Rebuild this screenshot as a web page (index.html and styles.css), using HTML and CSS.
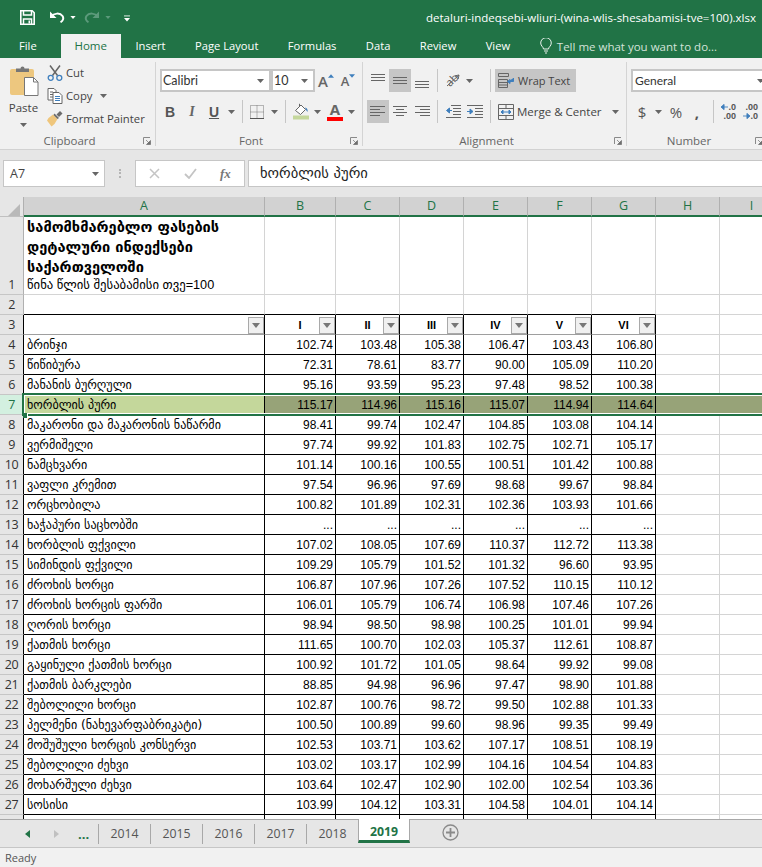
FILE: index.html
```html
<!DOCTYPE html>
<html lang="ka">
<head>
<meta charset="utf-8">
<title>detaluri-indeqsebi-wliuri</title>
<link rel="stylesheet" href="styles.css">
</head>
<body>
<svg class="defs" aria-hidden="true">
  <symbol id="caret" viewBox="0 0 7 4"><path d="M0 0h7L3.5 4z"/></symbol>
  <symbol id="launch" viewBox="0 0 8 8"><path d="M.5 7V.5H7" fill="none" stroke="#8a8a8a"/><path d="M3 3l3.5 3.5M7.5 3.5v4h-4z" fill="#6f6f6f" stroke="#6f6f6f" stroke-width=".7"/></symbol>
  <symbol id="al-top" viewBox="0 0 18 18"><path d="M2 3.5h14M2 6.5h14M2 9.5h14" stroke="#666" fill="none" transform="translate(0 -1)"/></symbol>
  <symbol id="al-mid" viewBox="0 0 18 18"><path d="M2 5.5h14M2 8.5h14M2 11.5h14" stroke="#666" fill="none"/></symbol>
  <symbol id="al-bot" viewBox="0 0 18 18"><path d="M2 9.500h14M2 12.500h14M2 15.500h14" stroke="#666" fill="none"/></symbol>
  <symbol id="al-left" viewBox="0 0 18 18"><path d="M1 3.500h15M1 6.500h10M1 9.500h15M1 12.500h10" stroke="#666" fill="none"/></symbol>
  <symbol id="al-center" viewBox="0 0 18 18"><path d="M2 3.500h14M5 6.500h8M2 9.500h14M5 12.500h8" stroke="#666" fill="none"/></symbol>
  <symbol id="al-right" viewBox="0 0 18 18"><path d="M2 3.500h15M7 6.500h10M2 9.500h15M7 12.500h10" stroke="#666" fill="none"/></symbol>
  <symbol id="arr-l" viewBox="0 0 8 6"><path d="M8 3H2M3.500 0L0 3l3.500 3z" stroke="#3f7fbd" fill="#3f7fbd"/></symbol>
  <symbol id="arr-r" viewBox="0 0 8 6"><path d="M0 3h6M4.500 0L8 3 4.500 6z" stroke="#3f7fbd" fill="#3f7fbd"/></symbol>
</svg>

<header class="titlebar">
  <div class="qat">
    <svg class="qat-save" viewBox="0 0 15 15"><path d="M.8.8h11.400l2 2v11.400H.8z" fill="none" stroke="#fff" stroke-width="1.600"/><path d="M3.500 1v4h8V1M3.500 14V9h8v5" fill="none" stroke="#fff" stroke-width="1.500"/><path d="M8.500 10.500h1.500v3H8.500z" fill="#fff"/></svg>
    <svg class="qat-undo" viewBox="0 0 16 12"><path d="M2 5.500c3-3.500 9-4 11.500-.5 1.500 2.300.5 5-2 6.200" fill="none" stroke="#fff" stroke-width="2"/><path d="M1 .5v6.500h6.500z" fill="#fff"/></svg>
    <svg class="caret-w"><use href="#caret"/></svg>
    <svg class="qat-redo" viewBox="0 0 16 12"><path d="M14 5.500c-3-3.500-9-4-11.500-.5-1.500 2.300-.5 5 2 6.200" fill="none" stroke="#5c9a7b" stroke-width="2"/><path d="M15 .5v6.500H8.500z" fill="#5c9a7b"/></svg>
    <svg class="caret-d"><use href="#caret"/></svg>
    <svg class="qat-more" viewBox="0 0 7 7"><path d="M0 .5h7" stroke="#fff"/><path d="M0 3h7L3.500 7z" fill="#fff"/></svg>
  </div>
  <div class="doc-title">detaluri-indeqsebi-wliuri-(wina-wlis-shesabamisi-tve=100).xlsx</div>
</header>

<nav class="tabs">
  <span class="tab tab-file">File</span>
  <span class="tab tab-on">Home</span>
  <span class="tab">Insert</span>
  <span class="tab">Page Layout</span>
  <span class="tab">Formulas</span>
  <span class="tab">Data</span>
  <span class="tab">Review</span>
  <span class="tab">View</span>
  <span class="tell">
    <svg class="bulb" viewBox="0 0 12 16"><path d="M3.500 11c0-2-2.800-3-2.800-6a5.300 5.300 0 0 1 10.600 0c0 3-2.800 4-2.800 6zM4 13h4M5 15h2" fill="none" stroke="#fff" stroke-opacity=".9"/></svg>
    <span>Tell me what you want to do...</span>
  </span>
</nav>

<section class="ribbon">
  <div class="group g-clip">
    <div class="g-body clip-body">
      <div class="paste">
        <svg class="paste-ic" viewBox="0 0 29 30"><rect y="3" width="24" height="26" rx="2" fill="#edc77f"/><path d="M6 6V2.500h4.500a2 2 0 0 1 4 0H19V6z" fill="#767676"/><path d="M14.500 11.500h9l4.500 4.500v13.500H14.500z" fill="#fff" stroke="#777"/><path d="M23.500 11.500V16H28" fill="none" stroke="#777"/></svg>
        <span class="paste-t">Paste</span>
        <svg class="caret"><use href="#caret"/></svg>
      </div>
      <div class="clip-list">
        <div class="clip-row">
          <svg class="clip-ic" viewBox="0 0 16 16"><path d="M3 .5l7.500 10M13 .5L5.500 10.500" stroke="#666" stroke-width="1.500" fill="none"/><circle cx="3.700" cy="12.800" r="2.500" fill="none" stroke="#3f7fbd" stroke-width="1.300"/><circle cx="12.300" cy="12.800" r="2.500" fill="none" stroke="#3f7fbd" stroke-width="1.300"/></svg>
          <span>Cut</span>
        </div>
        <div class="clip-row">
          <svg class="clip-ic" viewBox="0 0 16 16"><path d="M1 .5h6l2 2V12H1z" fill="#fff" stroke="#666"/><path d="M3 4h3M3 6.500h4M3 9h4" stroke="#666"/><path d="M6 4.500h6l3 3v8H6z" fill="#fff" stroke="#666"/><path d="M8 8.500h5M8 10.500h5M8 12.500h5" stroke="#3f7fbd"/></svg>
          <span>Copy</span>
          <svg class="caret caret-copy"><use href="#caret"/></svg>
        </div>
        <div class="clip-row">
          <svg class="clip-ic" viewBox="0 0 16 16"><path d="M6 3.500l4.500 4.500-3 5-3 2.500L0 9.500l1.500-2.500z" fill="#efc67c"/><path d="M6.500 4l4 4 1.500-1-4.500-4.500z" fill="#6b6b6b"/><path d="M9.500 3.500L13 0l2.500 2.500L12 6z" fill="#6b6b6b"/></svg>
          <span>Format Painter</span>
        </div>
      </div>
    </div>
    <div class="g-label"><span>Clipboard</span><svg class="launch"><use href="#launch"/></svg></div>
  </div>

  <div class="group g-font">
    <div class="g-body rows">
      <div class="row">
        <div class="field f-name"><span>Calibri</span><svg class="caret"><use href="#caret"/></svg></div>
        <div class="field f-size"><span>10</span><svg class="caret"><use href="#caret"/></svg></div>
        <div class="btn grow"><span class="ga ga-big">A</span><svg class="tri" viewBox="0 0 7 4"><path d="M0 4h7L3.500 0z" fill="#3f7fbd"/></svg></div>
        <div class="btn grow"><span class="ga">A</span><svg class="tri" viewBox="0 0 7 4"><path d="M0 0h7L3.500 4z" fill="#3f7fbd"/></svg></div>
      </div>
      <div class="row row-fmt">
        <div class="btn fb">B</div>
        <div class="btn fi">I</div>
        <div class="btn fu">U</div>
        <div class="cbtn"><svg class="caret"><use href="#caret"/></svg></div>
        <i class="sep s-a"></i>
        <div class="btn b-borders"><svg class="ic14" viewBox="0 0 14 14"><path d="M.5.500h13v13H.5zM7 .5v13M.5 7h13" fill="none" stroke="#777" stroke-dasharray="1 1"/><path d="M0 13.500h14" stroke="#555"/></svg></div>
        <div class="cbtn"><svg class="caret"><use href="#caret"/></svg></div>
        <i class="sep s-a"></i>
        <div class="btn b-fill"><svg class="ic17" viewBox="0 0 17 17"><path d="M2.500 7.500L8 2l4.500 4.500-5 5z" fill="#fff" stroke="#666"/><path d="M6.500 4V.8" stroke="#666"/><path d="M12 4.500c2 .5 3 2 2.500 4.500l-1.500-2z" fill="#3f7fbd"/><path d="M0 12.500h16v4H0z" fill="#c4d79b"/></svg></div>
        <div class="cbtn c11"><svg class="caret"><use href="#caret"/></svg></div>
        <div class="btn b-color"><span class="color-a">A</span><i class="color-bar"></i></div>
        <div class="cbtn c11"><svg class="caret"><use href="#caret"/></svg></div>
      </div>
    </div>
    <div class="g-label"><span>Font</span><svg class="launch"><use href="#launch"/></svg></div>
  </div>

  <div class="group g-align">
    <div class="g-body acols">
      <div class="acol">
        <div class="row">
          <div class="btn"><svg class="ic18"><use href="#al-top"/></svg></div>
          <div class="btn on"><svg class="ic18"><use href="#al-mid"/></svg></div>
          <div class="btn"><svg class="ic18"><use href="#al-bot"/></svg></div>
        </div>
        <div class="row">
          <div class="btn on"><svg class="ic18"><use href="#al-left"/></svg></div>
          <div class="btn"><svg class="ic18"><use href="#al-center"/></svg></div>
          <div class="btn"><svg class="ic18"><use href="#al-right"/></svg></div>
        </div>
      </div>
      <div class="sepcol"><i class="sep"></i><i class="sep"></i></div>
      <div class="acol acol-mid">
        <div class="row">
          <div class="btn orient"><span class="ab">ab</span><svg class="orient-arrow" viewBox="0 0 18 18"><path d="M3 15L15 4M15 4l-4 .8M15 4l-.8 4" fill="none" stroke="#666"/></svg></div>
          <div class="cbtn c11"><svg class="caret"><use href="#caret"/></svg></div>
        </div>
        <div class="row">
          <div class="btn"><svg class="ic18" viewBox="0 0 18 18"><path d="M7 3.500h10M9 6.500h8M9 9.500h8M9 12.500h8M2 15.500h15" transform="translate(0 -1)" stroke="#666" fill="none"/><path d="M8 7.500H3M5.500 5L2.500 7.500 5.500 10z" stroke="#3f7fbd" fill="#3f7fbd"/></svg></div>
          <div class="btn"><svg class="ic18" viewBox="0 0 18 18"><path d="M1 2.500h16M9 5.500h8M9 8.500h8M9 11.500h8M1 14.500h16" stroke="#666" fill="none"/><path d="M1 8.500h5M4 6l3 2.500L4 11z" stroke="#3f7fbd" fill="#3f7fbd"/></svg></div>
        </div>
      </div>
      <div class="sepcol"><i class="sep"></i><i class="sep"></i></div>
      <div class="acol acol-wrap">
        <div class="row">
          <div class="wide wide-wrap on">
            <svg class="ic16" viewBox="0 0 16 16"><path d="M.5.500h10v3H.5zM.5 6.500h9v8h-9z" fill="none" stroke="#666"/><path d="M.5 9.500h9M.5 12h9" stroke="#666"/><path d="M15.500 5v3.500H10M12 6.500L9.500 8.500 12 10.500z" fill="#3f7fbd" stroke="#3f7fbd"/></svg>
            <span>Wrap Text</span>
          </div>
        </div>
        <div class="row">
          <div class="wide">
            <svg class="ic16" viewBox="0 0 16 16"><path d="M.5.500h15v15H.5zM.5 4.500h15M.5 11.500h15M8 .5v4M8 11.500v4" fill="none" stroke="#666"/><path d="M3 8h10M3 8l2-2v4zM13 8l-2-2v4z" stroke="#3f7fbd" fill="#3f7fbd"/></svg>
            <span>Merge &amp; Center</span>
            <svg class="caret caret-merge"><use href="#caret"/></svg>
          </div>
        </div>
      </div>
    </div>
    <div class="g-label"><span>Alignment</span><svg class="launch"><use href="#launch"/></svg></div>
  </div>

  <div class="group g-num">
    <div class="g-body rows">
      <div class="row">
        <div class="field f-gen"><span>General</span><svg class="caret"><use href="#caret"/></svg></div>
      </div>
      <div class="row row-num">
        <div class="btn nsym">$</div>
        <div class="cbtn c10"><svg class="caret"><use href="#caret"/></svg></div>
        <div class="btn nsym n-pct">%</div>
        <div class="btn nsym n-com">,</div>
        <i class="sep s-n"></i>
        <div class="btn dec"><span class="dec-l"><svg class="arr"><use href="#arr-l"/></svg>.0</span><span class="dec-l">.00</span></div>
        <div class="btn dec"><span class="dec-l">.00</span><span class="dec-l"><svg class="arr"><use href="#arr-r"/></svg>.0</span></div>
      </div>
    </div>
    <div class="g-label"><span>Number</span><svg class="launch"><use href="#launch"/></svg></div>
  </div>
</section>

<section class="fbar">
  <div class="namebox"><span>A7</span><svg class="caret"><use href="#caret"/></svg></div>
  <div class="grip"></div>
  <div class="fbtns">
    <svg class="fx-x" viewBox="0 0 11 11"><path d="M1 1l9 9M10 1l-9 9" stroke="#c4c4c4" stroke-width="1.500"/></svg>
    <svg class="fx-c" viewBox="0 0 13 11"><path d="M1 6l4 4 7-9" fill="none" stroke="#c4c4c4" stroke-width="1.800"/></svg>
    <span class="fx">fx</span>
  </div>
  <div class="finput">ხორბლის პური</div>
</section>

<main class="sheet">
<table class="grid">
  <colgroup><col class="c-rn"><col class="c-a"><col class="c-b"><col class="c-n"><col class="c-n"><col class="c-n"><col class="c-n"><col class="c-n"><col class="c-n"><col class="c-n"></colgroup>
  <thead>
    <tr><th class="corner"><svg class="corner-t" viewBox="0 0 12 12"><path d="M12 0v12H0z" fill="#b9b9b9"/></svg></th><th>A</th><th>B</th><th>C</th><th>D</th><th>E</th><th>F</th><th>G</th><th>H</th><th>I</th></tr>
  </thead>
  <tbody>
    <tr class="r-title">
      <th class="rn">1</th>
      <td class="title-cell"><strong>სამომხმარებლო ფასების დეტალური ინდექსები საქართველოში</strong><span class="subtitle">წინა წლის შესაბამისი თვე=100</span></td>
      <td></td><td></td><td></td><td></td><td></td><td></td><td></td><td></td>
    </tr>
    <tr class="r-pre"><th class="rn">2</th><td></td><td></td><td></td><td></td><td></td><td></td><td></td><td></td><td></td></tr>
    <tr class="r-head">
      <th class="rn">3</th>
      <td class="hc"><i class="filter"></i></td>
      <td class="hc">I<i class="filter"></i></td>
      <td class="hc">II<i class="filter"></i></td>
      <td class="hc">III<i class="filter"></i></td>
      <td class="hc">IV<i class="filter"></i></td>
      <td class="hc">V<i class="filter"></i></td>
      <td class="hc">VI<i class="filter"></i></td>
      <td></td><td></td>
    </tr>
    <tr class="d"><th class="rn">4</th><td>ბრინჯი</td><td>102.74</td><td>103.48</td><td>105.38</td><td>106.47</td><td>103.43</td><td>106.80</td><td></td><td></td></tr>
    <tr class="d"><th class="rn">5</th><td>წიწიბურა</td><td>72.31</td><td>78.61</td><td>83.77</td><td>90.00</td><td>105.09</td><td>110.20</td><td></td><td></td></tr>
    <tr class="d"><th class="rn">6</th><td>მანანის ბურღული</td><td>95.16</td><td>93.59</td><td>95.23</td><td>97.48</td><td>98.52</td><td>100.38</td><td></td><td></td></tr>
    <tr class="d sel"><th class="rn">7</th><td class="active"><i class="selbox"></i><i class="handle"></i>ხორბლის პური</td><td>115.17</td><td>114.96</td><td>115.16</td><td>115.07</td><td>114.94</td><td>114.64</td><td></td><td></td></tr>
    <tr class="d"><th class="rn">8</th><td>მაკარონი და მაკარონის ნაწარმი</td><td>98.41</td><td>99.74</td><td>102.47</td><td>104.85</td><td>103.08</td><td>104.14</td><td></td><td></td></tr>
    <tr class="d"><th class="rn">9</th><td>ვერმიშელი</td><td>97.74</td><td>99.92</td><td>101.83</td><td>102.75</td><td>102.71</td><td>105.17</td><td></td><td></td></tr>
    <tr class="d"><th class="rn">10</th><td>ნამცხვარი</td><td>101.14</td><td>100.16</td><td>100.55</td><td>100.51</td><td>101.42</td><td>100.88</td><td></td><td></td></tr>
    <tr class="d"><th class="rn">11</th><td>ვაფლი კრემით</td><td>97.54</td><td>96.96</td><td>97.69</td><td>98.68</td><td>99.67</td><td>98.84</td><td></td><td></td></tr>
    <tr class="d"><th class="rn">12</th><td>ორცხობილა</td><td>100.82</td><td>101.89</td><td>102.31</td><td>102.36</td><td>103.93</td><td>101.66</td><td></td><td></td></tr>
    <tr class="d"><th class="rn">13</th><td>ხაჭაპური საცხობში</td><td>...</td><td>...</td><td>...</td><td>...</td><td>...</td><td>...</td><td></td><td></td></tr>
    <tr class="d"><th class="rn">14</th><td>ხორბლის ფქვილი</td><td>107.02</td><td>108.05</td><td>107.69</td><td>110.37</td><td>112.72</td><td>113.38</td><td></td><td></td></tr>
    <tr class="d"><th class="rn">15</th><td>სიმინდის ფქვილი</td><td>109.29</td><td>105.79</td><td>101.52</td><td>101.32</td><td>96.60</td><td>93.95</td><td></td><td></td></tr>
    <tr class="d"><th class="rn">16</th><td>ძროხის ხორცი</td><td>106.87</td><td>107.96</td><td>107.26</td><td>107.52</td><td>110.15</td><td>110.12</td><td></td><td></td></tr>
    <tr class="d"><th class="rn">17</th><td>ძროხის ხორცის ფარში</td><td>106.01</td><td>105.79</td><td>106.74</td><td>106.98</td><td>107.46</td><td>107.26</td><td></td><td></td></tr>
    <tr class="d"><th class="rn">18</th><td>ღორის ხორცი</td><td>98.94</td><td>98.50</td><td>98.98</td><td>100.25</td><td>101.01</td><td>99.94</td><td></td><td></td></tr>
    <tr class="d"><th class="rn">19</th><td>ქათმის ხორცი</td><td>111.65</td><td>100.70</td><td>102.03</td><td>105.37</td><td>112.61</td><td>108.87</td><td></td><td></td></tr>
    <tr class="d"><th class="rn">20</th><td>გაყინული ქათმის ხორცი</td><td>100.92</td><td>101.72</td><td>101.05</td><td>98.64</td><td>99.92</td><td>99.08</td><td></td><td></td></tr>
    <tr class="d"><th class="rn">21</th><td>ქათმის ბარკლები</td><td>88.85</td><td>94.98</td><td>96.96</td><td>97.47</td><td>98.90</td><td>101.88</td><td></td><td></td></tr>
    <tr class="d"><th class="rn">22</th><td>შებოლილი ხორცი</td><td>102.87</td><td>100.76</td><td>98.72</td><td>99.50</td><td>102.88</td><td>101.33</td><td></td><td></td></tr>
    <tr class="d"><th class="rn">23</th><td>პელმენი (ნახევარფაბრიკატი)</td><td>100.50</td><td>100.89</td><td>99.60</td><td>98.96</td><td>99.35</td><td>99.49</td><td></td><td></td></tr>
    <tr class="d"><th class="rn">24</th><td>მოშუშული ხორცის კონსერვი</td><td>102.53</td><td>103.71</td><td>103.62</td><td>107.17</td><td>108.51</td><td>108.19</td><td></td><td></td></tr>
    <tr class="d"><th class="rn">25</th><td>შებოლილი ძეხვი</td><td>103.02</td><td>103.17</td><td>102.99</td><td>104.16</td><td>104.54</td><td>104.83</td><td></td><td></td></tr>
    <tr class="d"><th class="rn">26</th><td>მოხარშული ძეხვი</td><td>103.64</td><td>102.47</td><td>102.90</td><td>102.00</td><td>102.54</td><td>103.36</td><td></td><td></td></tr>
    <tr class="d"><th class="rn">27</th><td>სოსისი</td><td>103.99</td><td>104.12</td><td>103.31</td><td>104.58</td><td>104.01</td><td>104.14</td><td></td><td></td></tr>
    <tr class="d"><th class="rn">28</th><td></td><td>99.99</td><td>99.59</td><td>99.99</td><td>101.81</td><td>97.89</td><td>94.89</td><td></td><td></td></tr>
  </tbody>
</table>
</main>

<section class="sheettabs">
  <div class="tabnav">
    <svg class="nav-l" viewBox="0 0 5 8"><path d="M5 0v8L0 4z"/></svg>
    <svg class="nav-r" viewBox="0 0 5 8"><path d="M0 0v8l5-4z"/></svg>
    <span class="dots">...</span>
  </div>
  <span class="st">2014</span>
  <span class="st">2015</span>
  <span class="st">2016</span>
  <span class="st">2017</span>
  <span class="st st-last">2018</span>
  <span class="st st-on">2019</span>
  <svg class="addsheet" viewBox="0 0 17 17"><circle cx="8.500" cy="8.500" r="7.500" fill="none" stroke="#8a8a8a" stroke-width="1.300"/><path d="M8.500 4v9M4 8.500h9" stroke="#8a8a8a" stroke-width="1.800"/></svg>
</section>

<footer class="status">Ready</footer>
</body>
</html>
```

FILE: styles.css
```css
* { box-sizing: border-box; }
html, body { margin: 0; padding: 0; }
body {
  width: 762px;
  height: 867px;
  overflow: hidden;
  display: flex;
  flex-direction: column;
  font-family: "Open Sans", "Noto Sans", sans-serif;
  font-size: 12px;
  color: #444;
  background: #e6e6e6;
}
.defs { position: absolute; width: 0; height: 0; }
i { display: block; }

/* title bar */
.titlebar {
  height: 34px;
  flex: none;
  background: #217346;
  display: flex;
  align-items: center;
  justify-content: space-between;
  padding: 0 6px 0 20px;
  color: #fff;
}
.qat { display: flex; align-items: center; }
.qat-save { width: 15px; height: 15px; }
.qat-undo { width: 16px; height: 12px; margin-left: 14px; margin-top: -1px; }
.caret-w, .caret-d { width: 6px; height: 3px; margin-left: 5px; }
.caret-w { fill: #fff; }
.caret-d { fill: #5c9a7b; }
.qat-redo { width: 16px; height: 12px; margin-left: 8px; margin-top: -1px; }
.qat-more { width: 6px; height: 7px; margin-left: 13px; margin-top: 2px; }
.doc-title { font-size: 11.5px; white-space: nowrap; }

/* ribbon tabs */
.tabs {
  height: 24px;
  flex: none;
  background: #217346;
  display: flex;
  color: #fff;
  white-space: nowrap;
}
.tab { padding: 0 14.7px; line-height: 23px; font-size: 11.2px; }
.tab-file { padding: 0; margin: 0 24px 0 19px; }
.tab-on { background: #f1f1f1; color: #217346; width: 60px; text-align: center; padding: 0; font-size: 11.5px; }
.tell { display: flex; align-items: center; gap: 5px; margin-left: 15px; font-size: 11.5px; color: #d4e3da; }
.bulb { width: 12px; height: 16px; }

/* ribbon */
.ribbon {
  height: 92px;
  flex: none;
  background: #f1f1f1;
  border-bottom: 1px solid #d2d2d2;
  display: flex;
  overflow: hidden;
}
.group {
  flex: none;
  display: flex;
  flex-direction: column;
  margin-top: 4px;
  height: 84px;
  border-right: 1px solid #d4d4d4;
}
.g-clip { width: 156px; }
.g-font { width: 207px; }
.g-align { width: 264px; }
.g-num { width: 140px; border-right: 0; }
.g-body { height: 73px; flex: none; }
.g-label { display: flex; align-items: center; height: 11px; color: #666; font-size: 11.5px; }
.g-label span { flex: 1; text-align: center; }
.launch { width: 8px; height: 8px; margin: 0 4px 0 4px; flex: none; }
.caret { width: 7px; height: 4px; fill: #666; flex: none; }

/* clipboard */
.clip-body { display: flex; }
.paste { width: 47px; display: flex; flex-direction: column; align-items: center; padding-top: 4px; }
.paste-ic { width: 29px; height: 30px; margin-left: 2px; }
.paste-t { font-size: 11.5px; margin-top: 4px; line-height: 16px; }
.paste .caret { margin-top: 7px; }
.clip-list { display: flex; flex-direction: column; margin-top: -1px; }
.clip-row { height: 23px; display: flex; align-items: center; white-space: nowrap; font-size: 11.3px; }
.clip-ic { width: 16px; height: 16px; margin-right: 3px; flex: none; }
.caret-copy { margin-left: 8px; }

/* shared rows */
.rows { display: flex; flex-direction: column; gap: 8px; padding: 7px 0 0 4px; }
.row { display: flex; height: 23px; align-items: center; }
.btn { width: 22px; height: 23px; display: flex; align-items: center; justify-content: center; flex: none; color: #555; }
.on { background: #c6c6c6; }
.cbtn { width: 12px; height: 23px; display: flex; align-items: center; justify-content: center; flex: none; }
.c11 { width: 11px; }
.c10 { width: 10px; }
.sep { width: 1px; height: 23px; background: #c6c6c6; flex: none; }
.field {
  height: 23px;
  background: #fff;
  border: 2px solid #c6c6c6;
  display: flex;
  align-items: center;
  justify-content: space-between;
  padding: 0 5px 0 1px;
  font-family: "Lato", sans-serif;
  font-size: 12.5px;
  color: #333;
  flex: none;
}

/* font */
.f-name { width: 111px; }
.f-size { width: 44px; }
.ga { font-size: 13px; color: #666; font-weight: 600; }
.ga-big { font-size: 15px; }
.tri { width: 6px; height: 4px; margin: -9px 0 0 0; }
.row-fmt { margin-left: -1px; }
.fb { font: bold 14px "Liberation Sans", sans-serif; }
.fi { font: italic bold 14px "Liberation Serif", serif; color: #666; }
.fu { font: bold 14px "Liberation Sans", sans-serif; text-decoration: underline; }
.s-a { margin: 0 3px 0 5px; }
.b-fill { margin-left: 1px; }
.ic14 { width: 14px; height: 14px; }
.ic16 { width: 16px; height: 16px; flex: none; }
.ic17 { width: 17px; height: 17px; }
.ic18 { width: 18px; height: 18px; }
.b-color { flex-direction: column; margin-left: 1px; }
.color-a { font: bold 15px/14px "Open Sans", sans-serif; color: #666; }
.color-bar { width: 16px; height: 4px; background: #f00; margin-top: 1px; }

/* alignment */
.acols { display: flex; padding: 7px 0 0 4px; }
.acol { display: flex; flex-direction: column; gap: 8px; }
.sepcol { display: flex; flex-direction: column; gap: 8px; margin: 0 4px; }
.acol-mid { width: 44px; }
.orient { position: relative; }
.ab { font: 11px/11px "Open Sans", sans-serif; color: #555; transform: rotate(-45deg); margin: 0 3px 3px 0; }
.orient-arrow { position: absolute; left: 2px; top: 2px; width: 18px; height: 18px; }
.wide { height: 23px; display: flex; align-items: center; gap: 3px; padding: 0 3px; font-size: 11.5px; white-space: nowrap; }
.wide-wrap { width: 81px; font-size: 11px; gap: 4px; }
.caret-merge { margin-left: 7px; }

/* number */
.f-gen { width: 140px; font-size: 12px; padding-left: 2px; }
.nsym { font-size: 15px; }
.n-pct { margin-left: 2px; }
.n-com { width: 20px; font-weight: bold; }
.s-n { margin: 0 3px 0 6px; }
.dec { flex-direction: column; align-items: flex-end; padding-right: 3px; font: bold 9px/9px "Liberation Sans", sans-serif; color: #555; }
.dec-l { display: flex; align-items: center; white-space: nowrap; }
.arr { width: 7px; height: 6px; }

/* formula bar */
.fbar {
  flex: none;
  height: 37px;
  margin-top: 10px;
  padding: 0 0 10px 3px;
  display: flex;
  align-items: stretch;
}
.namebox {
  width: 102px;
  background: #fff;
  border: 1px solid #c6c6c6;
  display: flex;
  align-items: center;
  justify-content: space-between;
  padding: 0 5px 0 6px;
  font-size: 12.5px;
  color: #444;
}
.grip { width: 2px; margin: 9px 14px; border-left: 2px dotted #b4b4b4; }
.fbtns {
  width: 110px;
  background: #fff;
  border: 1px solid #c6c6c6;
  display: flex;
  align-items: center;
  padding-left: 13px;
  gap: 24px;
}
.fx-x { width: 11px; height: 11px; }
.fx-c { width: 13px; height: 11px; }
.fx { font: italic bold 13px "Liberation Serif", serif; color: #777; margin-left: -1px; }
.finput {
  flex: 1;
  margin-left: 3px;
  background: #fff;
  border-top: 1px solid #c6c6c6;
  border-bottom: 1px solid #c6c6c6;
  border-left: 1px solid #c6c6c6;
  padding-left: 11px;
  line-height: 24px;
  font-family: "DejaVu Sans", sans-serif;
  font-size: 14.6px;
  color: #222;
}

/* sheet */
.sheet { flex: none; height: 622px; overflow: hidden; background: #fff; }
.grid {
  table-layout: fixed;
  width: 784px;
  border-collapse: separate;
  border-spacing: 0;
  font: 12px "Liberation Sans", sans-serif;
  color: #000;
}
.c-rn { width: 24px; }
.c-a { width: 241px; }
.c-b { width: 71px; }
.c-n { width: 64px; }
.grid thead th {
  height: 20px;
  padding: 0 0 2px;
  background: #d2d2d2;
  border-right: 1px solid #b0b0b0;
  border-bottom: 2px solid #217346;
  color: #217346;
  font: 400 12.5px "Open Sans", sans-serif;
  line-height: 15px;
}
.grid thead .corner { background: #e6e6e6; border-bottom: 1px solid #c0c0c0; padding: 6px 3px 0 0; text-align: right; border-right: 1px solid #b0b0b0; }
.corner-t { width: 12px; height: 12px; display: block; margin-left: auto; }
.grid td, .grid .rn { padding: 0; height: 20px; border-right: 1px solid #d4d4d4; border-bottom: 1px solid #d4d4d4; }
.grid .rn {
  background: #e6e6e6;
  border-right-color: #b0b0b0;
  border-bottom-color: #c6c6c6;
  font: 400 12.5px "Open Sans", sans-serif;
  letter-spacing: -.4px;
  color: #333;
  text-align: center;
}

/* row 1 */
.r-title td, .r-title .rn { height: 77px; vertical-align: bottom; }
.grid .title-cell {
  padding: 0 0 0 3px;
  font: 12.7px/17px "Liberation Sans", "DejaVu Sans", sans-serif;
}
.title-cell strong { display: block; font: bold 14.6px/20px "DejaVu Sans", sans-serif; width: 215px; }
.subtitle { display: block; height: 17px; white-space: nowrap; }
.r-title .rn { padding-bottom: 1px; }

.r-pre td:nth-child(n+2):nth-child(-n+8) { border-bottom-color: #000; }

/* header row */
.r-head .hc {
  position: relative;
  text-align: center;
  font-weight: bold;
  font-size: 11px;
  border-right-color: #000;
  border-bottom-color: #9e9e9e;
}
.grid .r-head .rn { border-right-color: #000; }
.filter {
  position: absolute;
  right: 0;
  bottom: 0;
  width: 16px;
  height: 17px;
  background: #f0f0f0;
  border: 1px solid #a9a9a9;
}
.filter::after {
  content: "";
  position: absolute;
  left: 3px;
  top: 5px;
  border: 4px solid transparent;
  border-top: 5px solid #777;
  border-bottom: 0;
}

/* data rows */
.grid .d td { text-align: right; padding-right: 2px; white-space: nowrap; }
.grid .d td:nth-child(2) {
  text-align: left;
  padding: 0 0 0 3px;
  font: 12.1px "DejaVu Sans", sans-serif;
}
.grid .d td:nth-child(n+2):nth-child(-n+8) { border-right-color: #000; border-bottom-color: #000; }
.grid .d .rn { border-right-color: #000; }
.grid .sel td { background: #97a378; }
.grid .sel td:nth-child(n+9) { border-color: #97a378; }
.grid .sel .rn { background: #d3f0e0; color: #217346; }
.grid .sel .active { position: relative; background: #c4d79b; }
.selbox {
  position: absolute;
  left: -2px;
  top: -2px;
  width: 800px;
  height: 23px;
  border: 2px solid #217346;
  border-right: 0;
  box-shadow: inset 0 0 0 1px #fff;
  z-index: 2;
}
.handle {
  position: absolute;
  left: -1px;
  top: 18px;
  width: 5px;
  height: 5px;
  background: #217346;
  border-right: 1px solid #fff;
  z-index: 3;
}

/* sheet tabs */
.sheettabs {
  flex: none;
  height: 29px;
  background: #e6e6e6;
  border-top: 1px solid #a8a8a8;
  border-bottom: 1px solid #c6c6c6;
  display: flex;
  align-items: flex-start;
  font-size: 12.3px;
  color: #555;
}
.tabnav { width: 99px; height: 20px; margin-top: 4px; display: flex; align-items: center; border-right: 1px solid #a8a8a8; padding-left: 25px; }
.nav-l { width: 5px; height: 8px; fill: #217346; }
.nav-r { width: 5px; height: 8px; fill: #c0c0c0; margin-left: 24px; }
.dots { color: #217346; font-weight: bold; margin-left: 19px; line-height: 20px; font-size: 13px; }
.st { width: 52px; height: 20px; margin-top: 4px; border-right: 1px solid #a8a8a8; text-align: center; line-height: 20px; }
.st-last { border-right: 0; width: 51px; }
.st-on {
  width: 52px;
  height: 24px;
  margin-top: -1px;
  background: #fff;
  border: 1px solid #a8a8a8;
  border-top: 0;
  border-bottom: 3px solid #217346;
  color: #217346;
  font-weight: 700;
  line-height: 26px;
}
.addsheet { width: 17px; height: 17px; margin: 4px 0 0 32px; }

/* status bar */
.status { flex: 1; background: #f1f1f1; padding-left: 5px; font-size: 11px; line-height: 19px; color: #555; }
```
